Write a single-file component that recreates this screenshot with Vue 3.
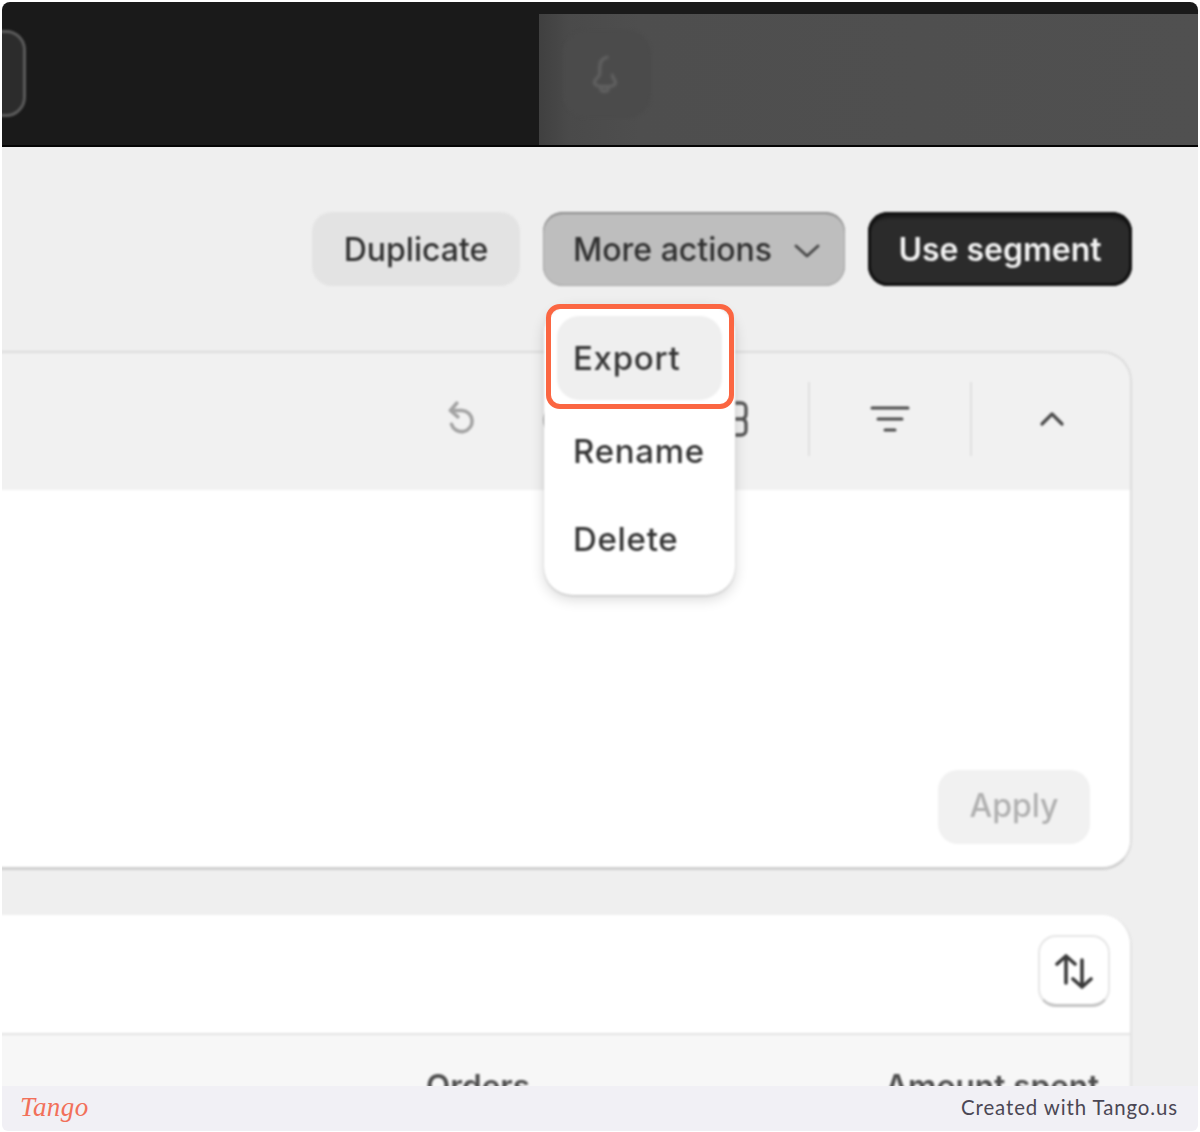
<script setup>
const menuItems = [
  { label: 'Export', active: true },
  { label: 'Rename', active: false },
  { label: 'Delete', active: false }
]
</script>

<template>
  <div class="page">
    <header class="topbar">
      <div class="store-btn"></div>
      <div class="veil">
        <div class="bell-wrap">
          <svg class="bell" viewBox="0 0 32 40" width="34" height="42" fill="none" stroke="#626262" stroke-width="3" stroke-linecap="round" stroke-linejoin="round">
            <path d="M18 4c-5 1-7 5-7 10v6c0 3-5 4-5 8 0 3 4 4 10 4s10-1 10-4c0-3-3-3-3-7" />
            <path d="M12 35c1 2 6 2 7 0" />
          </svg>
        </div>
      </div>
    </header>

    <main class="main">
      <div class="actions">
        <button class="btn btn-light">Duplicate</button>
        <button class="btn btn-mid">
          <span>More actions</span>
          <svg class="caret" viewBox="0 0 28 16" width="28" height="16" fill="none" stroke="#4a4a4a" stroke-width="3" stroke-linecap="round" stroke-linejoin="round">
            <path d="M3 3l11 10L25 3" />
          </svg>
        </button>
        <button class="btn btn-dark">Use segment</button>
      </div>

      <section class="card card-filter">
        <div class="card-head">
          <div class="tools">
            <svg class="undo" viewBox="0 0 32 36" width="34" height="38" fill="none" stroke="#a3a3a3" stroke-width="3.4" stroke-linecap="round" stroke-linejoin="round">
              <path d="M12 2L6 9l7 6" />
              <path d="M7 9h10a10 10 0 1 1-10 13" />
            </svg>
            <svg viewBox="0 0 32 36" width="34" height="38" fill="none" stroke="#a3a3a3" stroke-width="3.4" stroke-linecap="round" stroke-linejoin="round">
              <path d="M20 2l6 7-7 6" />
              <path d="M25 9H15a10 10 0 1 0 10 13" />
            </svg>
            <svg class="braces" viewBox="0 0 36 36" width="36" height="36" fill="none" stroke="#555" stroke-width="3.4" stroke-linecap="round" stroke-linejoin="round">
              <path d="M24 2h5c3 0 5 2 5 5v6c0 3-1 4-3 5 2 1 3 2 3 5v6c0 3-2 5-5 5h-5" />
              <path d="M24 18h7" />
            </svg>
          </div>
          <div class="cell">
            <svg viewBox="0 0 40 28" width="40" height="28" fill="none" stroke="#4a4a4a" stroke-width="3" stroke-linecap="round">
              <path d="M2 3h36M8 14h24M15 25h10" />
            </svg>
          </div>
          <div class="cell">
            <svg viewBox="0 0 26 16" width="26" height="16" fill="none" stroke="#4a4a4a" stroke-width="3.2" stroke-linecap="round" stroke-linejoin="round">
              <path d="M3 13L13 3l10 10" />
            </svg>
          </div>
        </div>
        <div class="card-body">
          <button class="btn btn-apply">Apply</button>
        </div>
      </section>

      <section class="card card-table">
        <div class="table-bar">
          <button class="sort-btn" aria-label="Sort">
            <svg viewBox="0 0 38 36" width="38" height="36" fill="none" stroke="#3a3a3a" stroke-width="3.6" stroke-linecap="round" stroke-linejoin="round">
              <path d="M11 30V3M2 11l9-8 9 8" />
              <path d="M27 7v27M18 26l9 8 9-8" />
            </svg>
          </button>
        </div>
        <div class="table-head">
          <span class="col-orders">Orders</span>
          <span class="col-amount">Amount spent</span>
        </div>
      </section>

      <div class="menu">
        <div
          v-for="item in menuItems"
          :key="item.label"
          class="menu-item"
          :class="{ active: item.active }"
        >{{ item.label }}</div>
      </div>
      <div class="highlight"></div>
    </main>

    <footer class="footer">
      <span class="logo">Tango</span>
      <span class="credit">Created with Tango.us</span>
    </footer>
  </div>
</template>

<style>
html, body { margin: 0; background: #fff; }
</style>

<style scoped>
.page {
  box-sizing: border-box;
  width: 1200px;
  height: 1132px;
  padding: 2px 2px 1px;
  display: flex;
  flex-direction: column;
  background: #fff;
  font-family: Inter, "Liberation Sans", sans-serif;
  overflow: hidden;
}

.topbar {
  position: relative;
  flex: none;
  height: 143px;
  background: #1a1a1a;
  border-bottom: 2px solid #050505;
  border-top-left-radius: 8px;
  border-top-right-radius: 8px;
  overflow: hidden;
}
.store-btn {
  position: absolute;
  left: -42px;
  top: 28px;
  width: 60px;
  height: 81px;
  border: 3px solid #5b5b5b;
  border-radius: 20px;
  background: #2c2c2c;
  filter: blur(1px);
}
.veil {
  position: absolute;
  left: 537px;
  right: 0;
  top: 12px;
  bottom: 0;
  background: linear-gradient(90deg, #404040 0, #4a4a4a 30px, #4e4e4e 100px, #505050 100%);
}
.bell-wrap {
  position: absolute;
  left: 24px;
  top: 16px;
  width: 88px;
  height: 88px;
  border-radius: 24px;
  background: #4b4b4b;
  display: flex;
  align-items: center;
  justify-content: center;
  filter: blur(1.6px);
}
.bell { margin-left: -5px; }

.main {
  position: relative;
  flex: 1;
  min-height: 0;
  overflow: hidden;
  background: #efefef;
  padding-right: 66px;
}
.actions {
  display: flex;
  justify-content: flex-end;
  gap: 23px;
  padding-top: 65px;
  height: 74px;
  filter: blur(.9px);
}
.btn {
  box-sizing: border-box;
  display: inline-flex;
  align-items: center;
  justify-content: center;
  height: 74px;
  border: 0;
  border-radius: 20px;
  padding: 0;
  font-family: inherit;
  font-size: 32px;
  font-weight: 500;
}
.btn-light { width: 208px; background: #e3e3e3; color: #303030; }
.btn-mid {
  width: 302px;
  justify-content: flex-start;
  padding-left: 30px;
  gap: 21px;
  background: #bebebe;
  color: #303030;
  box-shadow: inset 0 2px 1px #8d8d8d, inset 0 0 0 1px #a8a8a8;
}
.caret { margin-top: 4px; }
.btn-dark {
  width: 264px;
  background: #2b2b2b;
  color: #f3f3f3;
  font-weight: 600;
  box-shadow: inset 0 0 0 3px #111, inset 0 6px 2px #1c1c1c;
}

.card {
  box-sizing: border-box;
  margin-left: -30px;
  border-radius: 30px;
  overflow: hidden;
  filter: blur(.8px);
}
.card-filter {
  margin-top: 65px;
  height: 519px;
  border: 2px solid #dcdcdc;
  border-bottom-width: 3px;
  border-bottom-color: #cfcfcf;
  background: #f1f1f1;
}
.card-head {
  box-sizing: border-box;
  height: 137px;
  padding-bottom: 6px;
  margin-right: -2px;
  display: flex;
  justify-content: flex-end;
  align-items: center;
}
.tools {
  display: flex;
  align-items: center;
  gap: 61px;
  padding-right: 60px;
}
.undo { margin-top: 2px; }
.braces { margin-left: 78px; }
.cell {
  box-sizing: border-box;
  width: 162px;
  height: 74px;
  display: flex;
  align-items: center;
  justify-content: center;
  border-left: 2px solid #e0e0e0;
}
.card-body {
  box-sizing: border-box;
  height: 377px;
  background: #fff;
  padding: 280px 40px 0 0;
  display: flex;
  justify-content: flex-end;
  align-items: flex-start;
}
.btn-apply {
  width: 152px;
  padding-bottom: 3px;
  background: #f1f1f1;
  color: #b0b0b0;
  font-weight: 500;
}

.card-table {
  margin-top: 45px;
  height: 400px;
  background: #f7f7f7;
  border-right: 2px solid #e2e2e2;
}
.table-bar {
  box-sizing: border-box;
  height: 120px;
  background: #fff;
  border-bottom: 2px solid #e3e3e3;
  display: flex;
  justify-content: flex-end;
  align-items: flex-start;
  padding: 20px 20px 0 0;
}
.sort-btn {
  box-sizing: border-box;
  width: 72px;
  height: 72px;
  display: flex;
  align-items: center;
  justify-content: center;
  padding: 0;
  background: #fff;
  border: 2px solid #e6e6e6;
  border-bottom: 3px solid #c4c4c4;
  border-radius: 18px;
}
.table-head {
  display: flex;
  padding-top: 31px;
  font-size: 31.5px;
  font-weight: 600;
  color: #4e4e4e;
}
.col-orders { margin-left: 454px; }
.col-amount { margin-left: 355px; }

.menu {
  position: absolute;
  left: 542px;
  top: 158px;
  box-sizing: border-box;
  width: 191px;
  height: 290px;
  padding: 11px 13px;
  background: #fff;
  border-radius: 28px;
  box-shadow: 0 4px 14px rgba(0, 0, 0, .16), 0 1px 2px rgba(0, 0, 0, .18);
  filter: blur(.8px);
}
.menu-item {
  box-sizing: border-box;
  height: 88px;
  padding-left: 16px;
  display: flex;
  align-items: center;
  font-size: 33px;
  letter-spacing: .7px;
  font-weight: 500;
  color: #353535;
  border-radius: 22px;
}
.menu-item.active {
  height: 84px;
  margin-bottom: 7px;
  background: #efefef;
}
.highlight {
  position: absolute;
  left: 544px;
  top: 157px;
  box-sizing: border-box;
  width: 188px;
  height: 105px;
  border: 5px solid #fb6642;
  border-radius: 14px;
}

.footer {
  box-sizing: border-box;
  flex: none;
  height: 45px;
  background: #f1f0f5;
  display: flex;
  justify-content: space-between;
  align-items: center;
  padding: 0 20px 3px 18px;
  border-bottom-left-radius: 6px;
  border-bottom-right-radius: 6px;
}
.logo {
  font-family: "Liberation Serif", serif;
  font-style: italic;
  font-size: 27px;
  color: #f2705a;
  letter-spacing: .4px;
}
.credit {
  font-family: Lato, "Open Sans", sans-serif;
  font-size: 20.4px;
  letter-spacing: .9px;
  color: #4b4754;
}
</style>
